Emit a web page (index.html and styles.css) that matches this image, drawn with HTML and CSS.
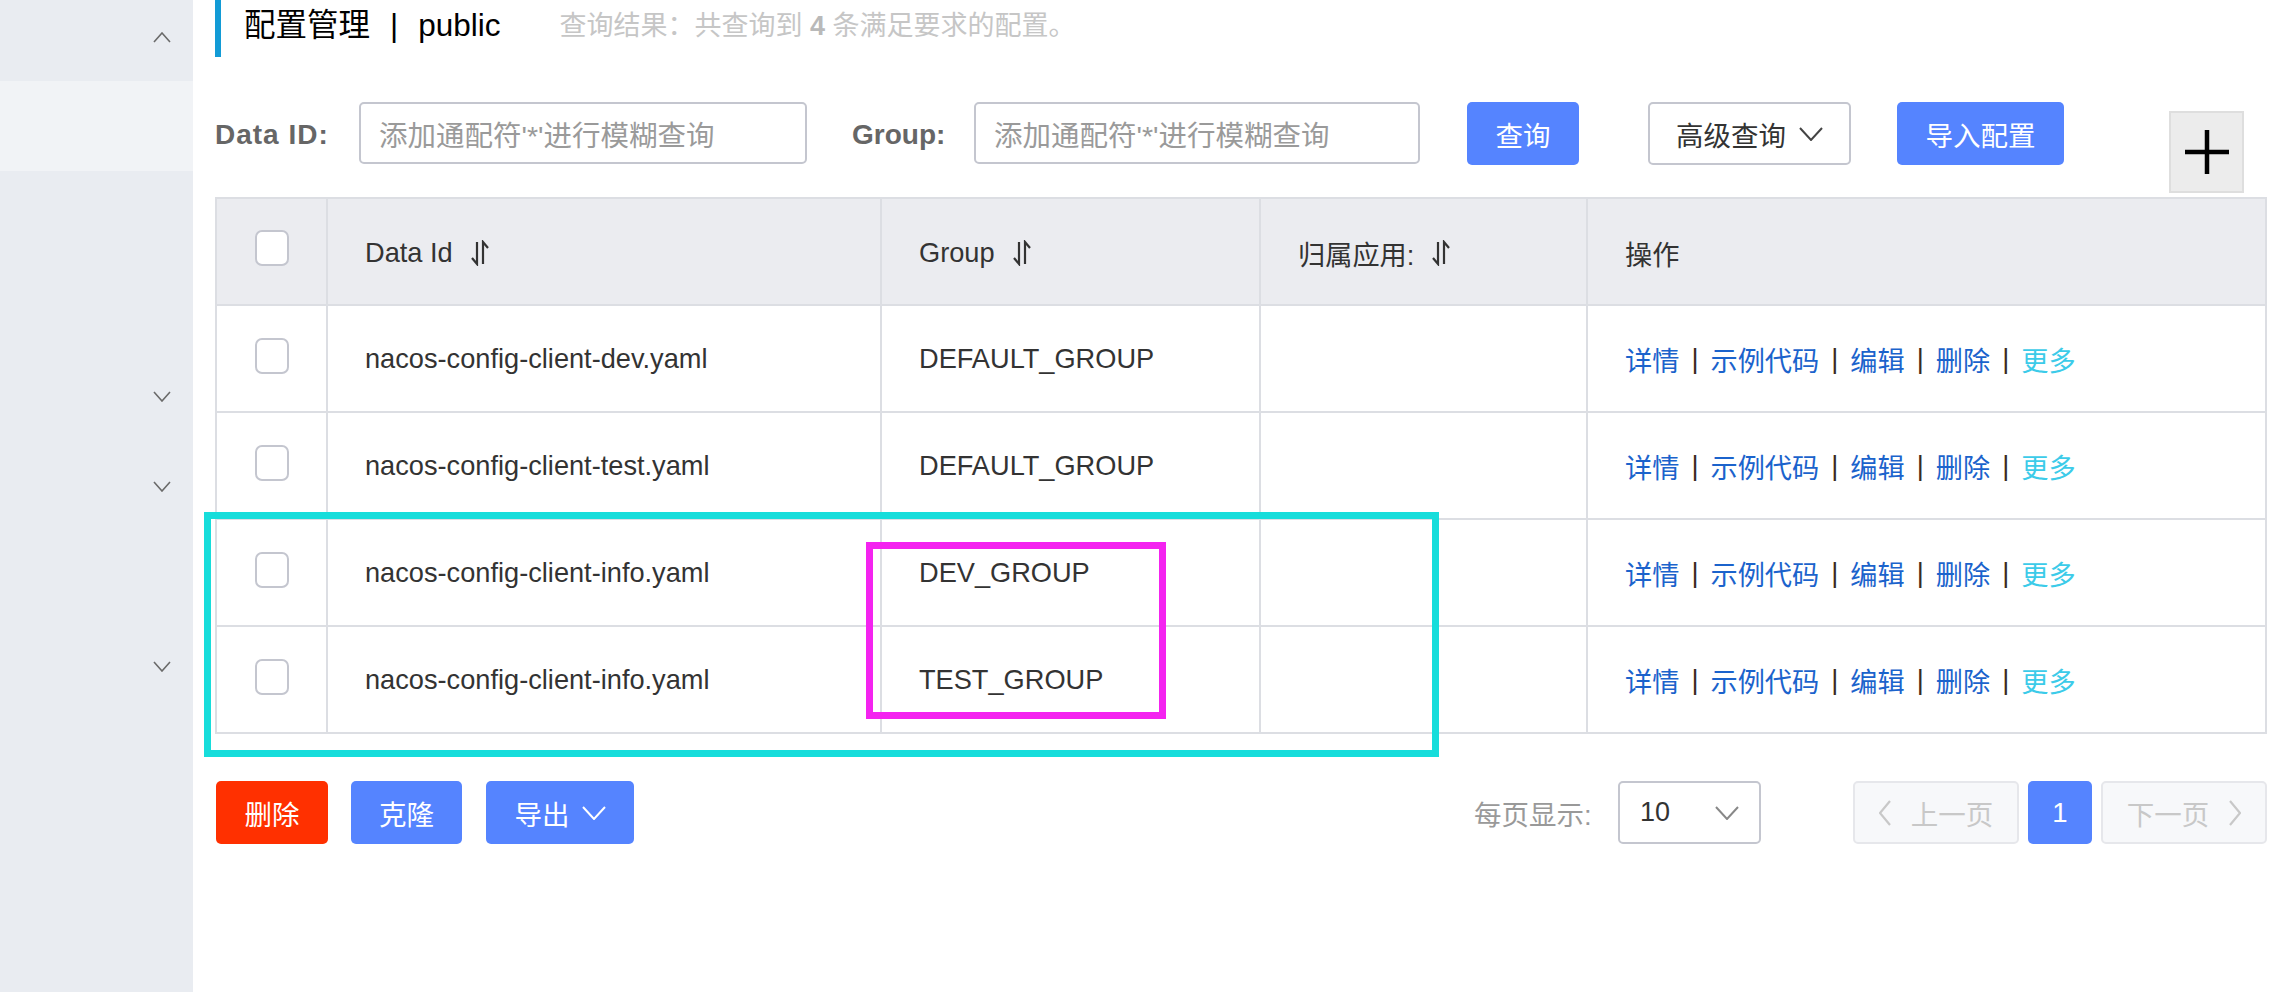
FILE: index.html
```html
<!DOCTYPE html>
<html lang="zh-CN">
<head>
<meta charset="utf-8">
<title>配置管理</title>
<link rel="stylesheet" href="styles.css">
</head>
<body>
<div class="app">
  <aside class="sidebar">
    <div class="nav-item nav-first"><svg class="nav-chev" viewBox="0 0 18 11"><polyline points="1,10 9,1 17,10"/></svg></div>
    <div class="nav-item nav-active"></div>
    <div class="nav-item"></div>
    <div class="nav-item"></div>
    <div class="nav-item"><svg class="nav-chev" viewBox="0 0 18 11"><polyline points="1,1 9,10 17,1"/></svg></div>
    <div class="nav-item"><svg class="nav-chev" viewBox="0 0 18 11"><polyline points="1,1 9,10 17,1"/></svg></div>
    <div class="nav-item"></div>
    <div class="nav-item"><svg class="nav-chev" viewBox="0 0 18 11"><polyline points="1,1 9,10 17,1"/></svg></div>
  </aside>

  <main class="main">
    <div class="page-head">
      <h1 class="title">配置管理<span class="title-sep">|</span>public</h1>
      <span class="summary">查询结果：共查询到 <b>4</b> 条满足要求的配置。</span>
    </div>

    <div class="filters">
      <label class="f-label f-label-id">Data ID:</label>
      <div class="f-input f-input-id">添加通配符'*'进行模糊查询</div>
      <label class="f-label f-label-group">Group:</label>
      <div class="f-input f-input-group">添加通配符'*'进行模糊查询</div>
      <button class="btn btn-primary btn-query">查询</button>
      <button class="btn btn-normal btn-adv">高级查询<svg class="chev" viewBox="0 0 24 14"><polyline points="1,1 12,13 23,1"/></svg></button>
      <button class="btn btn-primary btn-import">导入配置</button>
      <button class="btn-plus"><svg viewBox="0 0 44 44"><line x1="22" y1="0" x2="22" y2="44"/><line x1="0" y1="22" x2="44" y2="22"/></svg></button>
    </div>

    <div class="table-area">
      <div class="grid">
        <div class="row row-head">
          <div class="cell cell-check"><span class="checkbox"></span></div>
          <div class="cell">Data Id<svg class="sort" viewBox="0 0 20 26"><polyline points="2,18 7,24 7,2"/><polyline points="18,8 13,2 13,24"/></svg></div>
          <div class="cell">Group<svg class="sort" viewBox="0 0 20 26"><polyline points="2,18 7,24 7,2"/><polyline points="18,8 13,2 13,24"/></svg></div>
          <div class="cell">归属应用:<svg class="sort" viewBox="0 0 20 26"><polyline points="2,18 7,24 7,2"/><polyline points="18,8 13,2 13,24"/></svg></div>
          <div class="cell cell-last">操作</div>
        </div>
        <div class="row">
          <div class="cell cell-check"><span class="checkbox"></span></div>
          <div class="cell">nacos-config-client-dev.yaml</div>
          <div class="cell">DEFAULT_GROUP</div>
          <div class="cell"></div>
          <div class="cell cell-last ops"><a>详情</a><i>|</i><a>示例代码</a><i>|</i><a>编辑</a><i>|</i><a>删除</a><i>|</i><a class="more">更多</a></div>
        </div>
        <div class="row">
          <div class="cell cell-check"><span class="checkbox"></span></div>
          <div class="cell">nacos-config-client-test.yaml</div>
          <div class="cell">DEFAULT_GROUP</div>
          <div class="cell"></div>
          <div class="cell cell-last ops"><a>详情</a><i>|</i><a>示例代码</a><i>|</i><a>编辑</a><i>|</i><a>删除</a><i>|</i><a class="more">更多</a></div>
        </div>
        <div class="row">
          <div class="cell cell-check"><span class="checkbox"></span></div>
          <div class="cell">nacos-config-client-info.yaml</div>
          <div class="cell">DEV_GROUP</div>
          <div class="cell"></div>
          <div class="cell cell-last ops"><a>详情</a><i>|</i><a>示例代码</a><i>|</i><a>编辑</a><i>|</i><a>删除</a><i>|</i><a class="more">更多</a></div>
        </div>
        <div class="row row-end">
          <div class="cell cell-check"><span class="checkbox"></span></div>
          <div class="cell">nacos-config-client-info.yaml</div>
          <div class="cell">TEST_GROUP</div>
          <div class="cell"></div>
          <div class="cell cell-last ops"><a>详情</a><i>|</i><a>示例代码</a><i>|</i><a>编辑</a><i>|</i><a>删除</a><i>|</i><a class="more">更多</a></div>
        </div>
      </div>
      <div class="mark mark-cyan"></div>
      <div class="mark mark-magenta"></div>
    </div>

    <div class="footer">
      <button class="btn btn-danger btn-del">删除</button>
      <button class="btn btn-primary btn-clone">克隆</button>
      <button class="btn btn-primary btn-export">导出<svg class="chev" viewBox="0 0 24 14"><polyline points="1,1 12,13 23,1"/></svg></button>

      <div class="pager">
        <span class="pg-label">每页显示:</span>
        <div class="pg-select"><span>10</span><svg class="chev" viewBox="0 0 24 14"><polyline points="1,1 12,13 23,1"/></svg></div>
        <button class="pg-btn pg-prev"><svg class="pg-arrow" viewBox="0 0 12 26"><polyline points="11,1 1,13 11,25"/></svg>上一页</button>
        <button class="pg-num">1</button>
        <button class="pg-btn pg-next">下一页<svg class="pg-arrow" viewBox="0 0 12 26"><polyline points="1,1 11,13 1,25"/></svg></button>
      </div>
    </div>
  </main>
</div>
</body>
</html>
```

FILE: styles.css
```css
* { box-sizing: border-box; }

html, body {
  margin: 0;
  padding: 0;
  background: #ffffff;
}

body {
  font-family: "Liberation Sans", "Noto Sans CJK SC", sans-serif;
  font-size: 27px;
  color: #333333;
}

.app {
  display: flex;
  width: 2274px;
  height: 992px;
  overflow: hidden;
}

/* ---------- sidebar ---------- */
.sidebar {
  width: 193px;
  flex: 0 0 193px;
  background: #e9ecf1;
  display: flex;
  flex-direction: column;
}

.nav-item {
  height: 90px;
  flex: 0 0 90px;
  display: flex;
  align-items: center;
  justify-content: flex-end;
  padding-right: 22px;
}

.nav-first {
  height: 81px;
  flex-basis: 81px;
  align-items: flex-start;
  padding-top: 32px;
}

.nav-active {
  background: #f1f3f6;
}

.nav-chev {
  width: 18px;
  height: 11px;
  fill: none;
  stroke: #6a6a6a;
  stroke-width: 1.6;
}

/* ---------- main ---------- */
.main {
  flex: 1;
  padding: 0 7px 0 22px;
  display: flex;
  flex-direction: column;
}

.page-head {
  height: 57px;
  border-left: 6px solid #129bd6;
  padding-left: 23px;
  display: flex;
  align-items: flex-start;
}

.title {
  margin: 0;
  font-size: 31.5px;
  font-weight: normal;
  line-height: 50px;
  color: #000000;
}

.title-sep {
  margin: 0 20px;
}

.summary {
  margin-left: 59px;
  line-height: 52px;
  font-size: 27px;
  color: #c6c6c6;
}

.summary b {
  color: #b9b9b9;
}

/* ---------- filters ---------- */
.filters {
  display: flex;
  align-items: flex-start;
  margin-top: 45px;
}

.f-label {
  height: 62px;
  display: flex;
  align-items: center;
  padding-top: 4px;
  font-weight: bold;
  color: #666666;
  font-size: 28px;
}

.f-label-id { width: 144px; letter-spacing: 1px; }
.f-label-group { width: 122px; margin-left: 45px; }

.f-input {
  height: 62px;
  border: 2px solid #c4c6cf;
  border-radius: 5px;
  display: flex;
  align-items: center;
  padding-left: 18px;
  color: #9a9a9a;
  font-size: 28.5px;
  white-space: nowrap;
}

.f-input-id { width: 448px; }
.f-input-group { width: 446px; }

.btn {
  height: 63px;
  border: none;
  border-radius: 5px;
  font-family: inherit;
  font-size: 27.5px;
  display: flex;
  align-items: center;
  justify-content: center;
  padding: 0;
}

.btn-primary { background: #5584ff; color: #ffffff; }
.btn-danger { background: #ff3000; color: #ffffff; }
.btn-normal { background: #ffffff; color: #333333; border: 2px solid #c4c6cf; }

.btn-query { width: 112px; margin-left: 47px; }
.btn-adv { width: 203px; margin-left: 69px; }
.btn-import { width: 167px; margin-left: 46px; }

.chev {
  width: 24px;
  height: 14px;
  fill: none;
  stroke: currentColor;
  stroke-width: 2;
  margin-left: 13px;
}

.btn-adv .chev { stroke: #444444; }

.btn-plus {
  width: 75px;
  height: 82px;
  margin-left: 105px;
  margin-top: 9px;
  background: #ececec;
  border: 2px solid #dedede;
  display: flex;
  align-items: center;
  justify-content: center;
  padding: 0;
}

.btn-plus svg {
  width: 44px;
  height: 44px;
  stroke: #000000;
  stroke-width: 4.5;
}

/* ---------- table ---------- */
.table-area {
  position: relative;
  margin-top: 4px;
}

.grid {
  border: 2px solid #dcdee3;
  border-bottom: none;
  width: 2052px;
}

.row {
  display: grid;
  grid-template-columns: 111px 554px 379px 327px 677px;
  height: 107px;
  border-bottom: 2px solid #dcdee3;
}

.row-head {
  height: 107px;
  background: #ebecf0;
}

.cell {
  display: flex;
  align-items: center;
  padding: 0 37px;
  border-right: 2px solid #dcdee3;
  color: #333333;
  font-size: 27.2px;
  white-space: nowrap;
}

.row-head .cell { padding-top: 2px; }

.cell-last { border-right: none; }

.cell-check {
  justify-content: center;
  padding: 0;
}

.checkbox {
  width: 34px;
  height: 36px;
  border: 2px solid #c4c6cf;
  border-radius: 7px;
  background: #ffffff;
  margin-top: -6px;
}

.row-head .checkbox { margin-top: -10px; }

.sort {
  width: 20px;
  height: 26px;
  margin-left: 17px;
  fill: none;
  stroke: #333333;
  stroke-width: 2.2;
}

.ops a {
  color: #1b63cc;
}

.ops a.more {
  color: #3ccbe9;
}

.ops i {
  font-style: normal;
  color: #3a2a20;
  margin: 0 12px;
}

.mark {
  position: absolute;
  border-style: solid;
  border-width: 7px;
  pointer-events: none;
}

.mark-cyan {
  left: -11px;
  top: 315px;
  width: 1235px;
  height: 245px;
  border-color: #17dddb;
}

.mark-magenta {
  left: 651px;
  top: 345px;
  width: 300px;
  height: 177px;
  border-color: #f423f0;
}

/* ---------- footer ---------- */
.footer {
  display: flex;
  align-items: center;
  margin-top: 47px;
}

.btn-del { width: 112px; margin-left: 1px; }
.btn-clone { width: 111px; margin-left: 23px; }
.btn-export { width: 148px; margin-left: 24px; }
.btn-export .chev { margin-left: 12px; }

.pager {
  margin-left: auto;
  display: flex;
  align-items: center;
}

.pg-label {
  width: 144px;
  color: #999999;
  font-size: 27.5px;
}

.pg-select {
  width: 143px;
  height: 63px;
  border: 2px solid #c4c6cf;
  border-radius: 5px;
  display: flex;
  align-items: center;
  padding: 0 20px 0 20px;
  color: #333333;
}

.pg-select span { flex: 1; }
.pg-select .chev { stroke: #888888; margin-left: 0; }

.pg-btn {
  width: 166px;
  height: 63px;
  border: 2px solid #e6e7eb;
  border-radius: 5px;
  background: #f7f8fa;
  color: #c8c8c8;
  font-family: inherit;
  font-size: 27.5px;
  display: flex;
  align-items: center;
  justify-content: center;
  padding: 0;
}

.pg-prev { margin-left: 92px; }
.pg-next { margin-left: 9px; }

.pg-arrow {
  width: 12px;
  height: 26px;
  fill: none;
  stroke: #c8c8c8;
  stroke-width: 2.2;
}

.pg-prev .pg-arrow { margin-right: 20px; }
.pg-next .pg-arrow { margin-left: 20px; }

.pg-num {
  width: 64px;
  height: 63px;
  margin-left: 9px;
  border: none;
  border-radius: 5px;
  background: #5584ff;
  color: #ffffff;
  font-family: inherit;
  font-size: 27.5px;
  padding: 0;
}
```
